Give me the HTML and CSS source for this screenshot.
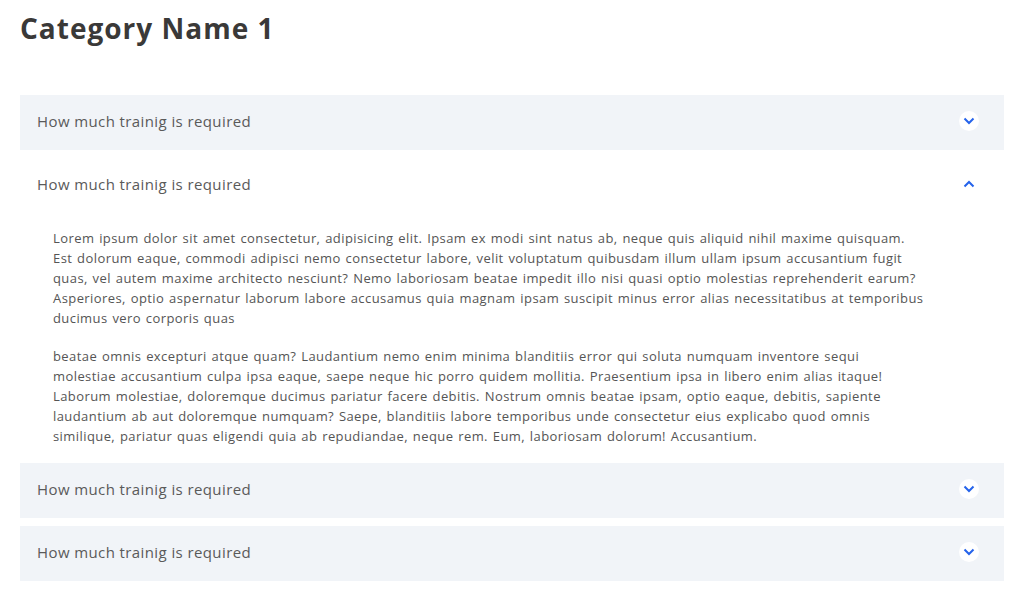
FILE: index.html
```html
<!DOCTYPE html>
<html lang="en">

<head>
    <meta charset="UTF-8">
    <meta name="viewport" content="width=device-width, initial-scale=1.0">
    <title>FAQ</title>
    <link rel="stylesheet" href="styles.css">
</head>

<body>
    <div class="faq">
        <h1 class="faq-title">Category Name 1</h1>

        <div class="accordion">
            <div class="acc-item">
                <div class="acc-head">
                    <span>How much trainig is required</span>
                    <span class="acc-icon">
                        <svg width="12" height="8" viewBox="0 0 12 8"><polyline points="1.5,1.5 6,6 10.5,1.5" fill="none" stroke="#2563eb" stroke-width="2"/></svg>
                    </span>
                </div>
            </div>

            <div class="acc-item open">
                <div class="acc-head">
                    <span>How much trainig is required</span>
                    <span class="acc-icon">
                        <svg width="12" height="8" viewBox="0 0 12 8"><polyline points="1.5,6.5 6,2 10.5,6.5" fill="none" stroke="#2563eb" stroke-width="2"/></svg>
                    </span>
                </div>
                <div class="acc-body">
                    <p>Lorem ipsum dolor sit amet consectetur, adipisicing elit. Ipsam ex modi sint natus ab, neque quis aliquid nihil maxime quisquam. Est dolorum eaque, commodi adipisci nemo consectetur labore, velit voluptatum quibusdam illum ullam ipsum accusantium fugit quas, vel autem maxime architecto nesciunt? Nemo laboriosam beatae impedit illo nisi quasi optio molestias reprehenderit earum? Asperiores, optio aspernatur laborum labore accusamus quia magnam ipsam suscipit minus error alias necessitatibus at temporibus ducimus vero corporis quas</p>
                    <p>beatae omnis excepturi atque quam? Laudantium nemo enim minima blanditiis error qui soluta numquam inventore sequi molestiae accusantium culpa ipsa eaque, saepe neque hic porro quidem mollitia. Praesentium ipsa in libero enim alias itaque! Laborum molestiae, doloremque ducimus pariatur facere debitis. Nostrum omnis beatae ipsam, optio eaque, debitis, sapiente laudantium ab aut doloremque numquam? Saepe, blanditiis labore temporibus unde consectetur eius explicabo quod omnis similique, pariatur quas eligendi quia ab repudiandae, neque rem. Eum, laboriosam dolorum! Accusantium.</p>
                </div>
            </div>

            <div class="acc-item">
                <div class="acc-head">
                    <span>How much trainig is required</span>
                    <span class="acc-icon">
                        <svg width="12" height="8" viewBox="0 0 12 8"><polyline points="1.5,1.5 6,6 10.5,1.5" fill="none" stroke="#2563eb" stroke-width="2"/></svg>
                    </span>
                </div>
            </div>

            <div class="acc-item">
                <div class="acc-head">
                    <span>How much trainig is required</span>
                    <span class="acc-icon">
                        <svg width="12" height="8" viewBox="0 0 12 8"><polyline points="1.5,1.5 6,6 10.5,1.5" fill="none" stroke="#2563eb" stroke-width="2"/></svg>
                    </span>
                </div>
            </div>
        </div>
    </div>
</body>

</html>
```

FILE: styles.css
```css
body {
    margin: 0;
    font-family: 'Open Sans', sans-serif;
    background-color: white;
    color: #555;
}

.faq {
    padding: 9px 20px 10px;
}

.faq-title {
    margin: 0;
    font-size: 28px;
    line-height: 38px;
    font-weight: 700;
    letter-spacing: 1px;
    color: #3a3938;
}

.accordion {
    margin-top: 48px;
}

.acc-item {
    background-color: #f1f4f8;
    margin-bottom: 8px;
}

.acc-item.open {
    background-color: white;
}

.acc-head {
    display: flex;
    justify-content: space-between;
    align-items: center;
    height: 55px;
    padding: 0 25px 4px 17px;
    box-sizing: border-box;
    font-size: 15px;
    letter-spacing: 0.4px;
    color: #5a5a5a;
}

.acc-icon {
    display: flex;
    align-items: center;
    justify-content: center;
    width: 20px;
    height: 20px;
    border-radius: 50%;
    background-color: white;
}

.acc-body {
    padding: 15px 78px 9px 33px;
    font-size: 13px;
    line-height: 20px;
    letter-spacing: 0.42px;
    word-spacing: 1px;
}

.acc-body p {
    margin: 0 0 18px;
}

.acc-body p:last-child {
    margin-bottom: 0;
}
```
